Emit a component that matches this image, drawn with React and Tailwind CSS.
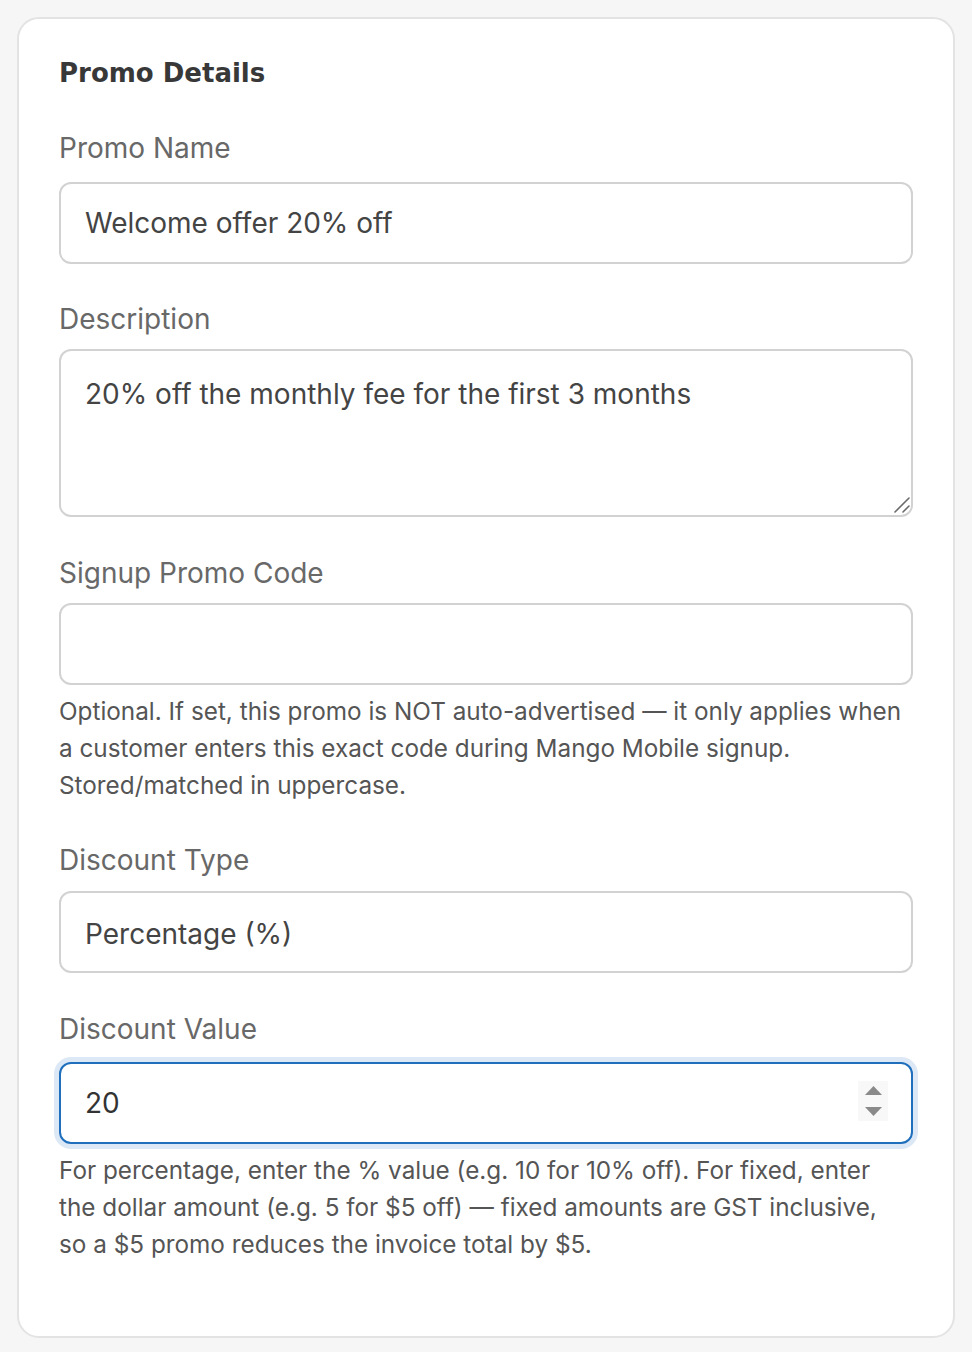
import { useState } from "react";

const font = { fontFamily: "Inter, 'Noto Sans', sans-serif" };

function Label({ children, className = "" }) {
  return <div className={`text-[28px] leading-[36px] text-[#686868] ${className}`}>{children}</div>;
}

function Help({ children, className = "" }) {
  return <p className={`mt-[8px] text-[24.3px] text-[#555555] ${className}`}>{children}</p>;
}

const boxCls =
  "block w-full rounded-[12px] border-2 border-[#d2d2d2] bg-white px-[24px] text-[28px] text-[#444444] outline-none";

export default function App() {
  const [name, setName] = useState("Welcome offer 20% off");
  const [desc, setDesc] = useState("20% off the monthly fee for the first 3 months");
  const [code, setCode] = useState("");
  const [type, setType] = useState("percentage");
  const [value, setValue] = useState("20");

  return (
    <div className="min-h-[1352px] bg-[#f6f6f6] pt-[17px] pb-[17px]" style={font}>
      <div className="mx-[17px] rounded-[22px] border-2 border-[#e3e3e3] bg-white px-[40px] pt-[36px] pb-[73px]">
        <h2
          className="text-[26px] font-bold leading-[36px] text-[#383838]"
          style={{ fontFamily: "'DejaVu Sans', Inter, sans-serif" }}
        >
          Promo Details
        </h2>

        <Label className="mt-[39px] mb-[16px]">Promo Name</Label>
        <input className={`${boxCls} h-[82px]`} value={name} onChange={(e) => setName(e.target.value)} />

        <Label className="mt-[37px] mb-[12px]">Description</Label>
        <div className="relative">
          <textarea
            className={`${boxCls} h-[168px] resize-none py-[22px] leading-[42px]`}
            value={desc}
            onChange={(e) => setDesc(e.target.value)}
          />
          <svg className="pointer-events-none absolute right-[3px] bottom-[4px]" width="16" height="16" viewBox="0 0 16 16">
            <path d="M1 15L15 1M9 15L15 9" stroke="#6a6a6a" strokeWidth="1.6" strokeLinecap="round" />
          </svg>
        </div>

        <Label className="mt-[38px] mb-[12px]">Signup Promo Code</Label>
        <input className={`${boxCls} h-[82px]`} value={code} onChange={(e) => setCode(e.target.value)} />
        <Help className="leading-[37px]">
          Optional. If set, this promo is NOT auto-advertised — it only applies when
          <br />a customer enters this exact code during Mango Mobile signup.
          <br />
          Stored/matched in uppercase.
        </Help>

        <Label className="mt-[38px] mb-[13px]">Discount Type</Label>
        <select
          className={`${boxCls} h-[82px] appearance-none pt-[4px]`}
          value={type}
          onChange={(e) => setType(e.target.value)}
        >
          <option value="percentage">Percentage (%)</option>
          <option value="fixed">Fixed amount ($)</option>
        </select>

        <Label className="mt-[38px] mb-[15px]">Discount Value</Label>
        <div className="relative">
          <input
            type="number"
            className="block h-[82px] w-full rounded-[12px] border-2 border-[#1f6fbd] bg-white px-[24px] text-[28px] text-[#333333] shadow-[0_0_0_5px_#dce8f5] outline-none [appearance:textfield] [&::-webkit-inner-spin-button]:appearance-none [&::-webkit-outer-spin-button]:appearance-none"
            value={value}
            onChange={(e) => setValue(e.target.value)}
          />
          <div className="absolute top-[19px] right-[25px] flex h-[40px] w-[30px] flex-col items-center justify-center gap-[12px] bg-[#f8f8f8]">
            <svg width="17" height="9" viewBox="0 0 17 9">
              <path d="M8.5 0L17 9H0Z" fill="#8a8a8a" />
            </svg>
            <svg width="17" height="9" viewBox="0 0 17 9">
              <path d="M0 0H17L8.5 9Z" fill="#8a8a8a" />
            </svg>
          </div>
        </div>
        <Help className="leading-[37px]">
          For percentage, enter the % value (e.g. 10 for 10% off). For fixed, enter
          <br />
          the dollar amount (e.g. 5 for $5 off) — fixed amounts are GST inclusive,
          <br />
          so a $5 promo reduces the invoice total by $5.
        </Help>
      </div>
    </div>
  );
}
